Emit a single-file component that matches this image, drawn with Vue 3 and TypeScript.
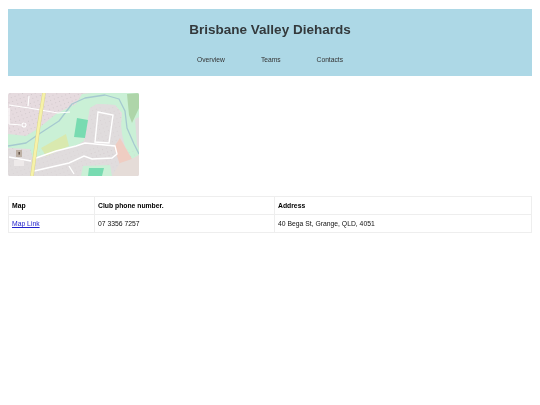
<script setup lang="ts">
const navItems = ['Overview', 'Teams', 'Contacts']
</script>

<template>
  <div class="page">
    <header class="banner">
      <h1>Brisbane Valley Diehards</h1>
      <nav class="nav">
        <a v-for="item in navItems" :key="item" href="#">{{ item }}</a>
      </nav>
    </header>

    <svg class="map" viewBox="0 0 131 83" width="131" height="83">
      <defs>
        <pattern id="lots" width="4" height="4" patternUnits="userSpaceOnUse" patternTransform="rotate(-20)">
          <rect x="1" y="1" width="1" height="1" fill="#d2c9cc" />
        </pattern>
      </defs>
      <!-- residential base -->
      <rect width="131" height="83" fill="#e6dbdf" />
      <rect width="131" height="83" fill="url(#lots)" />
      <!-- parkland along the creek -->
      <path d="M0 41 L18 43 L31 35 L48 21 L68 11 L74 1 L84 0 L131 0 L131 62 L124 66 L112 45 L114 20 L107 12 L89 11 L82 15 L76 48 L68 53 L48 58 L25 66 L22 56 L0 55Z" fill="#caf0d6" />
      <!-- suburb in the bend -->
      <path d="M82 15 L89 11 L107 12 L112 20 L114 41 L118 58 L124 66 L112 83 L0 83 L0 56 L22 57 L25 66 L48 58 L68 53 L77 48Z" fill="#e0dcdd" />
      <rect x="0" y="56" width="131" height="27" fill="url(#lots)" opacity="0.4" />
      <rect x="82" y="14" width="30" height="50" fill="url(#lots)" opacity="0.5" />
      <path d="M112 45 L124 66 L112 72 L106 54Z" fill="#efcdc2" />
      <path d="M127 26 L131 24 L131 56 L129 52Z" fill="#e0dcdd" />
      <path d="M104 83 L112 70 L124 66 L131 62 L131 83Z" fill="#e5dcd8" />
      <path d="M75 73 L102 72 L104 83 L73 83Z" fill="#caf0d6" />
      <!-- forest -->
      <path d="M119 1 L131 0 L131 15 L124 30 L121 22Z" fill="#aed5a9" />
      <!-- field and pitches -->
      <path d="M33 55 L58 41 L61 53 L38 63Z" fill="#d9e9af" />
      <path d="M69 25 L80 27 L77 45 L66 44Z" fill="#78dbb1" />
      <path d="M81 75 L96 75 L94 83 L80 83Z" fill="#78dbb1" />
      <!-- creek -->
      <path d="M0 53 L18 50 L31 41 L51 28 L64 11 L77 5 L97 2 L111 6 L117 18 L119 35 L126 51 L131 61" fill="none" stroke="#a6c9d0" stroke-width="1.3" stroke-linejoin="round" />
      <!-- local roads -->
      <path d="M1 64 L23 68 M25 66 L48 58 L68 53 L77 50 L107 53 L109 61 L104 65 L84 66 L76 63 L61 70 L26 78 M61 73 L66 81 M90 19 L105 22 L101 50 L87 49Z" fill="none" stroke="#fff" stroke-width="1.4" />
      <path d="M1 12 L21 15 L50 20 L62 19 M21 3 L20 13 M1 15 L1 31 L13 32" fill="none" stroke="#fff" stroke-width="1.2" />
      <circle cx="16" cy="32" r="2" fill="#e6dbdf" stroke="#fff" stroke-width="1.1" />
      <!-- building -->
      <rect x="8" y="57" width="6" height="7" fill="#bdb0a4" />
      <rect x="10.5" y="59" width="1.4" height="2.6" fill="#5a4b40" />
      <rect x="6" y="67" width="10" height="6" fill="#eeeaea" />
      <!-- motorway -->
      <path d="M36 0 L31 31 L24 83" fill="none" stroke="#dcd690" stroke-width="3.6" />
      <path d="M36 0 L31 31 L24 83" fill="none" stroke="#f6f2a8" stroke-width="2.6" />
    </svg>

    <table class="info">
      <thead>
        <tr>
          <th class="col-map">Map</th>
          <th class="col-phone">Club phone number.</th>
          <th>Address</th>
        </tr>
      </thead>
      <tbody>
        <tr>
          <td><a href="#">Map Link</a></td>
          <td>07 3356 7257</td>
          <td>40 Bega St, Grange, QLD, 4051</td>
        </tr>
      </tbody>
    </table>
  </div>
</template>

<style>
body {
  margin: 0;
  background: #fff;
}
</style>

<style scoped>
.page {
  padding: 8px 8px 0 8px;
  font-family: 'Liberation Sans', Arial, sans-serif;
}

.banner {
  background: #add8e6;
  height: 67px;
  margin-top: 1px;
  padding-top: 13px;
  box-sizing: border-box;
}

h1 {
  margin: 0;
  text-align: center;
  font-size: 13.5px;
  line-height: 16px;
  color: #33393c;
  filter: blur(0.3px);
}

.nav {
  display: flex;
  justify-content: center;
  gap: 36px;
  margin-top: 17px;
  filter: blur(0.2px);
}

.nav a {
  font-size: 6.7px;
  line-height: 10px;
  color: #333;
  text-decoration: none;
}

.map {
  display: block;
  margin-top: 17px;
  border-radius: 2px;
  filter: blur(0.6px);
}

.info {
  width: 100%;
  margin-top: 20px;
  border-collapse: collapse;
  font-size: 6.8px;
  color: #111;
  filter: blur(0.2px);
}

th,
td {
  border: 1px solid #eee;
  height: 17px;
  padding: 0 3px;
  text-align: left;
}

.col-map {
  width: 79px;
}

.col-phone {
  width: 173px;
}

th {
  color: #000;
}

td a {
  color: #22c;
}
</style>
